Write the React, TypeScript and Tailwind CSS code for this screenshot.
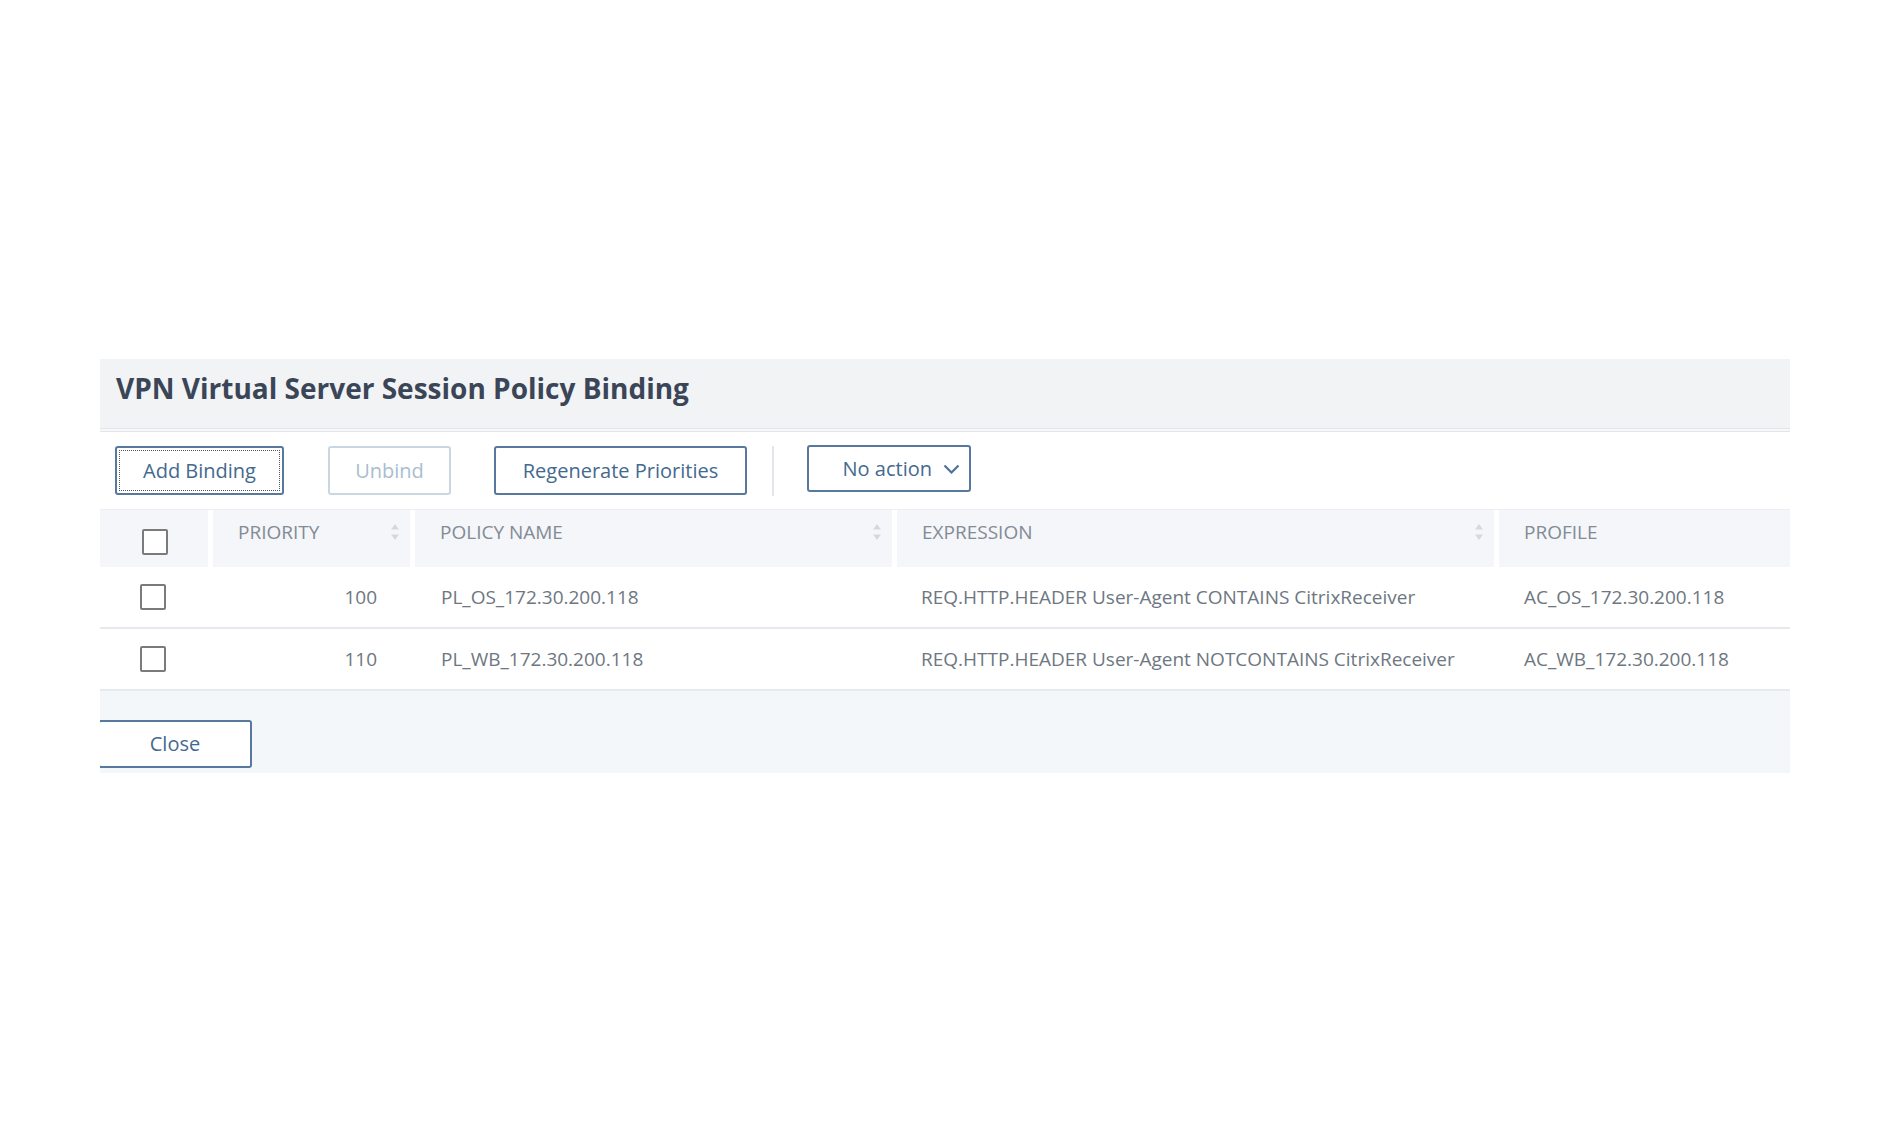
import React from "react";

interface Binding {
  priority: string;
  policy: string;
  expression: string;
  profile: string;
}

const bindings: Binding[] = [
  {
    priority: "100",
    policy: "PL_OS_172.30.200.118",
    expression: "REQ.HTTP.HEADER User-Agent CONTAINS CitrixReceiver",
    profile: "AC_OS_172.30.200.118",
  },
  {
    priority: "110",
    policy: "PL_WB_172.30.200.118",
    expression: "REQ.HTTP.HEADER User-Agent NOTCONTAINS CitrixReceiver",
    profile: "AC_WB_172.30.200.118",
  },
];

const cols = "grid grid-cols-[108px_197px_477px_597px_1fr] gap-x-[5px]";

const Checkbox = () => (
  <span className="block w-[26px] h-[26px] border-2 border-[#7b7b7b] rounded-[2px] bg-white" />
);

const SortIcon = () => (
  <svg width="10" height="18" viewBox="0 0 10 18" className="mt-[3px] shrink-0">
    <polygon points="5,1 9,6.5 1,6.5" fill="#d5d9de" />
    <polygon points="1,11.5 9,11.5 5,17" fill="#d5d9de" />
  </svg>
);

const HeaderCell = ({ label, sortable = true }: { label: string; sortable?: boolean }) => (
  <div className="h-[57px] bg-[#f4f6f9] flex justify-between items-start pt-[10px] pl-[25px] pr-[10px]">
    <span className="text-[19px] leading-[24px] text-[#828b95]">{label}</span>
    {sortable && <SortIcon />}
  </div>
);

export default function App() {
  return (
    <div className="min-h-screen bg-white pt-[359px] font-['Open_Sans',sans-serif]">
      <div className="ml-[100px] w-[1690px] overflow-hidden">
        {/* Title bar */}
        <div className="h-[69px] bg-[#f2f3f5] flex items-center pl-[16px] pb-[12px]">
          <h1 className="text-[28px] font-bold text-[#3a4657] leading-none">
            VPN Virtual Server Session Policy Binding
          </h1>
        </div>
        <div className="h-[4px] border-y border-[#e3e5e9] bg-[#f7f8f9]" />

        {/* Toolbar */}
        <div className="h-[77px] flex items-center pl-[15px] text-[20px]">
          <button className="w-[169px] h-[49px] border-2 border-[#56799d] rounded-[3px] text-[#44698f] outline outline-1 outline-dotted outline-[#555] outline-offset-[-5px]">
            Add Binding
          </button>
          <button className="ml-[44px] w-[123px] h-[49px] border-2 border-[#cad7e3] rounded-[3px] text-[#a9bdd0]">
            Unbind
          </button>
          <button className="ml-[43px] w-[253px] h-[49px] border-2 border-[#56799d] rounded-[3px] text-[#44698f]">
            Regenerate Priorities
          </button>
          <span className="ml-[25px] w-[2px] h-[50px] bg-[#e2e5e9]" />
          <button className="ml-[33px] w-[164px] h-[47px] -mt-[4px] border-2 border-[#56799d] rounded-[3px] text-[#44698f] flex items-center justify-end gap-[11px] pr-[9px]">
            <span>No action</span>
            <svg width="17" height="10" viewBox="0 0 17 10">
              <polyline points="1.5,1.5 8.5,8.5 15.5,1.5" fill="none" stroke="#4d7398" strokeWidth="2.2" />
            </svg>
          </button>
        </div>

        {/* Table */}
        <div className="border-t border-[#eceef1]">
          <div className={cols}>
            <div className="h-[57px] bg-[#f4f6f9] pl-[42px] pt-[19px]">
              <Checkbox />
            </div>
            <HeaderCell label="PRIORITY" />
            <HeaderCell label="POLICY NAME" />
            <HeaderCell label="EXPRESSION" />
            <HeaderCell label="PROFILE" sortable={false} />
          </div>
          {bindings.map((b) => (
            <div
              key={b.priority}
              className={`${cols} h-[62px] items-center border-b-2 border-[#e6eaee] text-[19px] text-[#6e7781]`}
            >
              <div className="pl-[40px]">
                <Checkbox />
              </div>
              <div className="text-right pr-[33px]">{b.priority}</div>
              <div className="pl-[26px]">{b.policy}</div>
              <div className="pl-[24px]">{b.expression}</div>
              <div className="pl-[25px]">{b.profile}</div>
            </div>
          ))}
        </div>

        {/* Footer */}
        <div className="h-[82px] bg-[#f4f7fa] pt-[29px]">
          <button className="-ml-[2px] w-[154px] h-[48px] border-2 border-[#56799d] rounded-[3px] text-[20px] text-[#44698f] bg-white">
            Close
          </button>
        </div>
      </div>
    </div>
  );
}
